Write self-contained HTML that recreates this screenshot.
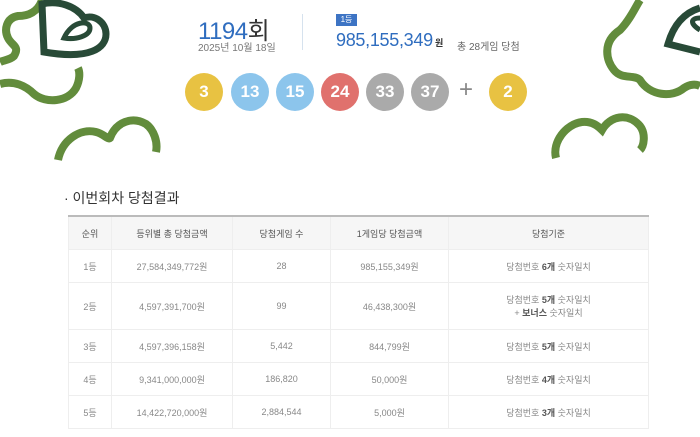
<!DOCTYPE html>
<html><head><meta charset="utf-8"><style>
body{margin:0;width:700px;height:437px;background:#fff;overflow:hidden;position:relative;font-family:"Liberation Sans","Noto Sans CJK KR",sans-serif;color:#666}
.abs{position:absolute}
.ball{position:absolute;top:73px;width:38px;height:38px;border-radius:50%;color:#fff;font-size:17px;font-weight:600;text-align:center;line-height:38px}
table{position:absolute;left:68px;top:215px;width:581px;border-collapse:collapse;font-size:9px;color:#888;border-top:2px solid #bbb}
td,th{border:1px solid #eee;text-align:center;font-weight:normal;padding:0}
th{background:#f6f6f6;height:32px;color:#555}
td{height:32px}
b{color:#555}
</style></head><body>
<svg class="abs" style="left:0;top:0" width="700" height="170" fill="none" stroke-linecap="butt">
<g stroke="#628c3c" stroke-width="8">
<path d="M42 0 C38 12 28 16 18 16 C6 18 4 30 8 38 C12 46 20 46 14 56 C10 60 4 60 0 62"/>
<path d="M0 84 C14 80 26 86 34 94 C46 104 68 102 76 88 C80 80 80 72 78 68"/>
<path d="M58 160 C62 140 80 128 96 132 C104 134 108 140 110 138 C116 122 132 116 146 124 C154 130 158 142 156 152"/>
<path d="M640 0 C636 6 630 20 620 30 C602 42 606 60 614 70 C622 80 634 74 640 80 C650 96 672 98 684 88 C690 84 696 84 700 86"/>
<path d="M556 158 C552 142 566 124 582 122 C592 121 598 126 602 130 C610 116 628 112 640 126 C646 134 644 146 640 150"/>
</g>
<g stroke="#284a37" stroke-width="7">
<path d="M44 52 L42 4 C58 0 76 6 84 18 C94 14 106 22 106 34 C106 48 90 60 44 52 Z"/>
<path d="M64 38 C72 20 90 20 90 28 C90 36 76 40 64 38 Z" stroke-width="5"/>
<path d="M700 52 L668 44 C672 30 680 14 700 8"/>
<path d="M700 30 C690 24 690 18 700 18" stroke-width="5"/>
</g>
</svg>
<div class="abs" style="left:198px;top:11px;font-size:24px;color:#2f6dbf;letter-spacing:-0.5px">1194<span style="color:#333">회</span></div>
<div class="abs" style="left:198px;top:39px;font-size:10px;color:#777">2025년 10월 18일</div>
<div class="abs" style="left:302px;top:14px;width:1px;height:36px;background:#d6e2ee"></div>
<div class="abs" style="left:336px;top:14px;width:21px;height:12px;background:#3d74c4;color:#fff;font-size:8px;text-align:center;line-height:12px">1등</div>
<div class="abs" style="left:336px;top:30px;font-size:18px;color:#2f6dbf;letter-spacing:-0.3px">985,155,349<span style="font-size:9px;color:#333;font-weight:bold"> 원</span></div>
<div class="abs" style="left:457px;top:38px;font-size:10px;color:#666">총 28게임 당첨</div>
<div class="ball" style="left:185px;background:#e8c242">3</div>
<div class="ball" style="left:231px;background:#8cc5ec">13</div>
<div class="ball" style="left:276px;background:#8cc5ec">15</div>
<div class="ball" style="left:321px;background:#e0716d">24</div>
<div class="ball" style="left:366px;background:#aaa">33</div>
<div class="ball" style="left:411px;background:#aaa">37</div>
<div class="abs" style="left:459px;top:76px;font-size:24px;color:#888">+</div>
<div class="ball" style="left:489px;background:#e8c242">2</div>
<div class="abs" style="left:64px;top:188px;font-size:14px;color:#333">· 이번회차 당첨결과</div>
<table>
<tr><th style="width:42px">순위</th><th style="width:120px">등위별 총 당첨금액</th><th style="width:97px">당첨게임 수</th><th style="width:117px">1게임당 당첨금액</th><th>당첨기준</th></tr>
<tr><td>1등</td><td>27,584,349,772원</td><td>28</td><td>985,155,349원</td><td>당첨번호 <b>6개</b> 숫자일치</td></tr>
<tr><td style="height:46px">2등</td><td>4,597,391,700원</td><td>99</td><td>46,438,300원</td><td>당첨번호 <b>5개</b> 숫자일치<br>+ <b>보너스</b> 숫자일치</td></tr>
<tr><td>3등</td><td>4,597,396,158원</td><td>5,442</td><td>844,799원</td><td>당첨번호 <b>5개</b> 숫자일치</td></tr>
<tr><td>4등</td><td>9,341,000,000원</td><td>186,820</td><td>50,000원</td><td>당첨번호 <b>4개</b> 숫자일치</td></tr>
<tr><td>5등</td><td>14,422,720,000원</td><td>2,884,544</td><td>5,000원</td><td>당첨번호 <b>3개</b> 숫자일치</td></tr>
</table>
</body></html>
